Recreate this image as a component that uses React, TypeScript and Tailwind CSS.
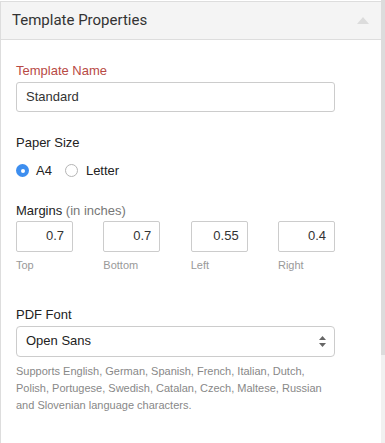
import React from "react";

export default function App() {
  const margins = [
    { v: "0.7", l: "Top" },
    { v: "0.7", l: "Bottom" },
    { v: "0.55", l: "Left" },
    { v: "0.4", l: "Right" },
  ];
  return (
    <div className="w-[385px] h-[443px] bg-white overflow-hidden flex" style={{ fontFamily: '"Liberation Sans", Arial, sans-serif' }}>
      <div className="flex-1 mt-px border-t border-l border-[#dddddd] flex flex-col">
        <div className="h-[38px] bg-[#f4f4f4] border-b border-[#dddddd] flex items-center justify-between pl-[11px] pr-[12px]">
          <span className="text-[15px] text-[#333333]" style={{ fontFamily: 'Roboto, "Liberation Sans", sans-serif' }}>Template Properties</span>
          <svg width="12" height="7" viewBox="0 0 12 7"><polygon points="6,0 12,7 0,7" fill="#dcdcdc" /></svg>
        </div>
        <div className="pl-[15px] pr-[46px] pt-[23px] flex flex-col">
          <div className="text-[13px] text-[#b84a45] leading-[16px]">Template Name</div>
          <div className="mt-[3px] h-[30px] border border-[#cccccc] rounded-[3px] flex items-center px-[9px] text-[13px] text-[#333333]">Standard</div>

          <div className="mt-[23px] text-[13px] text-[#222222] leading-[16px]">Paper Size</div>
          <div className="mt-[10px] flex items-center text-[13px] text-[#222222]">
            <span className="w-[13px] h-[13px] rounded-full bg-[#3d8eef] flex items-center justify-center">
              <span className="w-[4px] h-[4px] rounded-full bg-white" />
            </span>
            <span className="ml-[7px]">A4</span>
            <span className="ml-[13px] w-[13px] h-[13px] rounded-full border border-[#b5b5b5] bg-white" />
            <span className="ml-[8px]">Letter</span>
          </div>

          <div className="mt-[22px] text-[13px] text-[#222222] leading-[16px]">
            Margins <span className="text-[#777777]">(in inches)</span>
          </div>
          <div className="mt-[2px] flex justify-between">
            {margins.map((m) => (
              <div key={m.l} className="flex flex-col">
                <div className="w-[57px] h-[31px] border border-[#cccccc] rounded-[2px] flex items-center justify-end pr-[8px] text-[13px] text-[#333333]">{m.v}</div>
                <div className="mt-[7px] text-[11px] text-[#999999] leading-[13px]">{m.l}</div>
              </div>
            ))}
          </div>

          <div className="mt-[35px] text-[13px] text-[#222222] leading-[16px]">PDF Font</div>
          <div className="mt-[3px] h-[31px] border border-[#cccccc] rounded-[4px] flex items-center justify-between pl-[9px] pr-[8px] text-[13px] text-[#222222]">
            <span>Open Sans</span>
            <svg width="7" height="11" viewBox="0 0 7 11">
              <polygon points="3.5,0 7,4 0,4" fill="#666666" />
              <polygon points="0,7 7,7 3.5,11" fill="#666666" />
            </svg>
          </div>
          <div className="mt-[6px] text-[11px] leading-[17px] text-[#888888]">
            Supports English, German, Spanish, French, Italian, Dutch, Polish, Portugese, Swedish, Catalan, Czech, Maltese, Russian and Slovenian language characters.
          </div>
        </div>
      </div>
      <div className="w-[4px] flex flex-col">
        <div className="h-[355px] bg-[#dcdcdc]" />
        <div className="flex-1 bg-[#f1f1f1]" />
      </div>
    </div>
  );
}
